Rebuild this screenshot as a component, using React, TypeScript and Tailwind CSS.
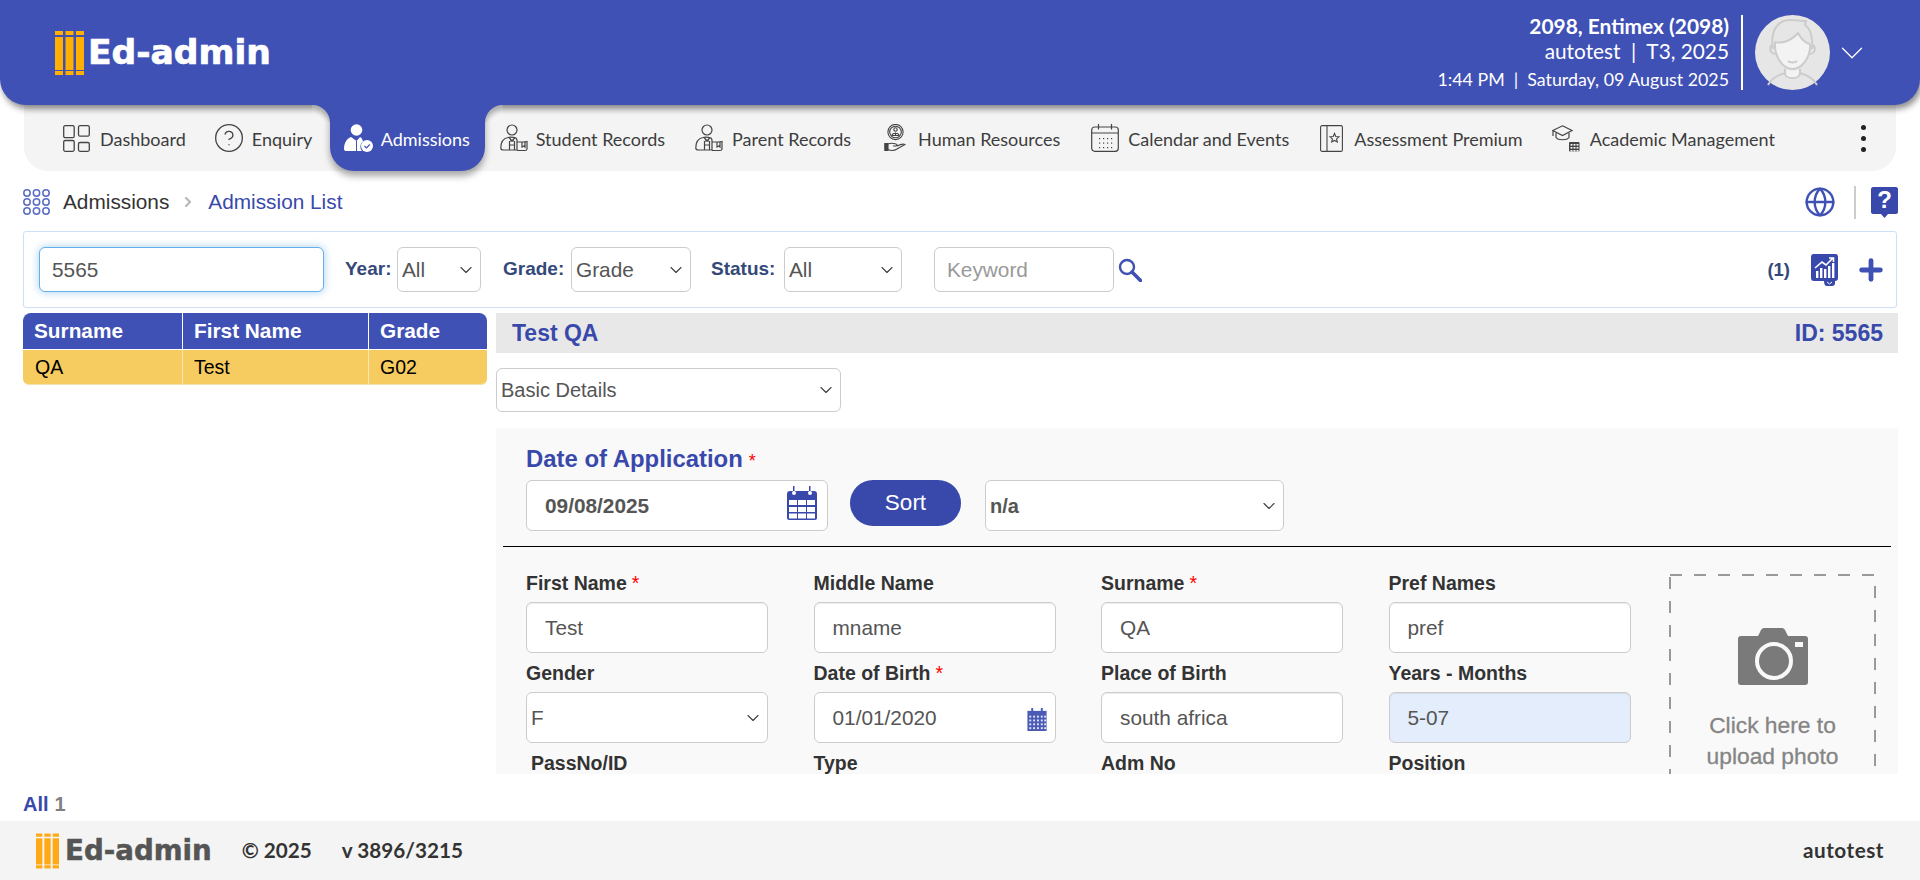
import { ChevronDown, ChevronRight, CircleHelp, Globe, Plus } from "lucide-react";

const BLUE = "#3f51b5";

function LogoBars({ className, color }: { className: string; color: string }) {
  return (
    <svg viewBox="0 0 29 44" className={className}>
      {[0, 10.5, 21].map((x) => (
        <g key={x} fill={color}>
          <rect x={x} y="0" width="8" height="4" />
          <rect x={x} y="6" width="8" height="33" />
          <rect x={x} y="40" width="8" height="4" />
        </g>
      ))}
    </svg>
  );
}

function DashboardIcon() {
  return (
    <svg viewBox="0 0 27 27" className="w-[27px] h-[27px] shrink-0" fill="none" stroke="#444" strokeWidth="1.3">
      <rect x="0.7" y="0.7" width="10.5" height="12" rx="1.5" />
      <rect x="15.5" y="0.7" width="10.8" height="10.5" rx="1.5" />
      <rect x="0.7" y="15.5" width="10.5" height="10.8" rx="1.5" />
      <rect x="15.5" y="17.5" width="10.8" height="8.8" rx="1.5" />
    </svg>
  );
}

function PersonBookIcon() {
  return (
    <svg viewBox="0 0 28 28" className="w-[28px] h-[28px] shrink-0" fill="none" stroke="#444" strokeWidth="1.2">
      <circle cx="12" cy="6" r="5" />
      <path d="M8 13.5 C3 14.5 0.8 19 0.8 24 C0.8 25.5 2 26 3.5 26 L17 26 L17 16 L16 14 C15 13.7 10 13 8 13.5 Z" />
      <path d="M9 13.5 L12 17 L15 13.5 M10 17 L14 17 M9.5 17 V26 M14.5 17 V26 M10 21 H14" />
      <path d="M17 18 H23 C25 18 27 17.5 27 17.5 V25 C27 26 26 26.5 25 26.5 H17 M22 18 V23 L24 22 L25 23 V18" />
    </svg>
  );
}

function AdmissionsIcon() {
  return (
    <svg viewBox="0 0 29 28" className="w-[29px] h-[28px] shrink-0">
      <circle cx="12.5" cy="6" r="5.8" fill="#fff" />
      <path d="M7 13 C2.5 14.5 0 19.5 0 25 C0 26.5 1 27 2.5 27 H18 C16 25 15.5 20 19 17.5 C18.5 15.5 18 14 16 13 L12.5 17 Z" fill="#fff" />
      <path d="M12.5 17 V27" stroke={BLUE} strokeWidth="1" />
      <circle cx="23" cy="22" r="6" fill="#fff" />
      <path d="M20.5 22 L22.5 24 L25.8 20.5" stroke={BLUE} strokeWidth="1.2" fill="none" />
    </svg>
  );
}

function HrIcon() {
  return (
    <svg viewBox="0 0 22 28" className="w-[22px] h-[28px] shrink-0" fill="none" stroke="#444" strokeWidth="1.1">
      <circle cx="11.5" cy="8" r="7.6" />
      <circle cx="11.5" cy="8" r="5.8" />
      <circle cx="11.5" cy="5.5" r="1.7" />
      <path d="M8 11.5 C8 8.5 15 8.5 15 11.5 Z M11.5 8.5 V11.5" />
      <path d="M0.8 19.5 H4 V26.5 H0.8 Z" fill="#444" />
      <path d="M4 20 C7 18.5 9 19 12 20 C13.5 20.5 13.5 22 11.5 22 H9 M4 25.5 C8 27.5 10 27 13 25 L21 20.5 C19 19.5 17 20 13 22" />
    </svg>
  );
}

function CalendarIcon() {
  return (
    <svg viewBox="0 0 28 28" className="w-[28px] h-[28px] shrink-0" fill="none" stroke="#444" strokeWidth="1.2">
      <rect x="0.7" y="3" width="26.6" height="24.3" rx="3" />
      <path d="M0.7 9 H27.3 M7.5 0 V5.5 M20.5 0 V5.5" />
      {[14, 18.5, 23].map((y) =>
        [8, 12, 16, 20].map((x) => <rect key={`${x}-${y}`} x={x} y={y} width="1.2" height="1.2" fill="#444" stroke="none" />)
      )}
    </svg>
  );
}

function BookStarIcon() {
  return (
    <svg viewBox="0 0 23 27" className="w-[23px] h-[27px] shrink-0" fill="none" stroke="#444" strokeWidth="1.1">
      <rect x="0.6" y="0.6" width="21.8" height="25.8" rx="1.5" />
      <path d="M7 0.6 V26.4" />
      <path d="M14.5 8.5 L15.8 11.5 L19 11.8 L16.6 13.9 L17.3 17 L14.5 15.4 L11.7 17 L12.4 13.9 L10 11.8 L13.2 11.5 Z" />
    </svg>
  );
}

function GradCapIcon() {
  return (
    <svg viewBox="0 0 28 27" className="w-[28px] h-[27px] shrink-0" fill="none" stroke="#444" strokeWidth="1.2">
      <path d="M10.5 0.8 L20 5.5 L10.5 10.5 L0.8 5.5 Z" />
      <path d="M4 8 V12.5 C6 15.5 15 15.5 17 12.5 V8" />
      <path d="M1 6 V11" />
      <rect x="17" y="17" width="10.5" height="9.5" rx="1" fill="#444" stroke="none" />
      {[19, 22, 25].map((y) =>
        [18.5, 21.5, 24.5].map((x) => <rect key={`${x}-${y}`} x={x} y={y} width="2" height="1.6" fill="#f4f4f4" stroke="none" />)
      )}
    </svg>
  );
}

function Avatar() {
  return (
    <svg viewBox="0 0 75 75" className="w-[75px] h-[75px]">
      <circle cx="37.5" cy="37.5" r="37.5" fill="#e6e6e6" />
      <path d="M20 28 C27 29 35 26 43 18 C46 24 51 28 55 29 C56 42 47 54 37.5 54 C28 54 19 42 20 28 Z" fill="#f3f3f3" />
      <path d="M30 54 V60 C30 66 45 66 45 60 V54 C40 56 35 56 30 54 Z" fill="#f3f3f3" />
      <g fill="none" stroke="#cccccc" strokeWidth="2">
        <path d="M18 34 C15 16 22 6 34 5 C40 4.500 46 6 51 6 L50 10 C56 14 58 24 57 34" />
        <path d="M20 27 C27 29 36 26 43 18 C46 24 51 28 55 29" />
        <path d="M20 27 C19 42 28 54 37.5 54 C47 54 56 42 55 29" />
        <path d="M18 30 C14 31 14 38 20 39 M57 30 C61 31 61 38 55 39" />
        <path d="M33 46 C35 48 40 48 42 46" />
        <path d="M30 54 V58 C30 65 45 65 45 58 V54" />
        <path d="M13 70 C16 64 23 60 30 58 M45 58 C52 60 59 64 62 70" />
      </g>
    </svg>
  );
}

function BlueCalendar({ className }: { className: string }) {
  return (
    <svg viewBox="0 0 30 34" className={className}>
      <path d="M0 8 C0 6 1 5 3 5 H27 C29 5 30 6 30 8 V32 C30 33 29 34 28 34 H2 C1 34 0 33 0 32 Z" fill="#3949ab" />
      <path d="M6 0 H7.5 V7 H6 Z M22 0 H23.500 V7 H22 Z" fill="#3949ab" />
      <rect x="5" y="5" width="4" height="4" rx="2" fill="#fff" />
      <rect x="21" y="5" width="4" height="4" rx="2" fill="#fff" />
      {[14, 21, 27.5].map((y) =>
        [2, 11, 20].map((x) => <rect key={`${x}-${y}`} x={x} y={y} width="8" height="5" fill="#fff" />)
      )}
    </svg>
  );
}

function SmallCalendar() {
  return (
    <svg viewBox="0 0 20 24" className="w-[20px] h-[23px] shrink-0">
      <rect x="0" y="3" width="20" height="21" fill="#4a5ab5" />
      <path d="M4 0 H6 V4 H4 Z M14 0 H16 V4 H14 Z" fill="#4a5ab5" />
      {[8, 12, 16, 20].map((y) =>
        [2, 6, 10, 14, 17.5].map((x) => <rect key={`${x}-${y}`} x={x} y={y} width="2" height="2" fill="#dfe3f5" />)
      )}
    </svg>
  );
}

function CameraIcon() {
  return (
    <svg viewBox="0 0 70 57" className="w-[70px] h-[57px]">
      <path d="M3 8 H20 L23 2 C24 0.5 25 0 27 0 H43 C45 0 46 0.5 47 2 L50 8 H67 C69 8 70 9 70 11 V54 C70 56 69 57 67 57 H3 C1 57 0 56 0 54 V11 C0 9 1 8 3 8 Z" fill="#7a7a7a" />
      <circle cx="36" cy="33" r="17" fill="#7a7a7a" stroke="#f9f9f9" strokeWidth="4" />
      <rect x="57" y="14" width="8" height="5" fill="#f9f9f9" />
    </svg>
  );
}

function HelpBubble() {
  return (
    <svg viewBox="0 0 27 31" className="w-[27px] h-[31px]">
      <path d="M2 0 H25 C26 0 27 1 27 2 V25 C27 26 26 27 25 27 H17 L13.5 31 L10 27 H2 C1 27 0 26 0 25 V2 C0 1 1 0 2 0 Z" fill="#3949ab" />
      <text x="13.5" y="21" textAnchor="middle" fontSize="24" fontWeight="700" fill="#fff" fontFamily="Liberation Sans">?</text>
    </svg>
  );
}

function ChartIcon() {
  return (
    <svg viewBox="0 0 27 32" className="w-[27px] h-[32px]">
      <path d="M3 0 H24 C26 0 27 1 27 3 V24 C27 26 26 27 24 27 V29 C24 31 23 32 21 32 H16 C14 32 13 30 13 27 H3 C1 27 0 26 0 24 V3 C0 1 1 0 3 0 Z" fill="#3949ab" />
      <path d="M4 14 L11 8 L15 11 L22 4 M18 4 H22.5 V8" stroke="#fff" strokeWidth="1.6" fill="none" />
      {[
        [5, 17, 7],
        [9, 14, 10],
        [13, 15, 9],
        [17, 12, 12],
        [21, 9, 15],
      ].map(([x, y, h]) => (
        <rect key={x} x={x} y={y} width="2.4" height={h} fill="#fff" />
      ))}
      <path d="M16 28 L18.5 30 L21 28" stroke="#fff" strokeWidth="1" fill="none" />
    </svg>
  );
}

function SearchIcon() {
  return (
    <svg viewBox="0 0 24 24" className="ml-[4px] w-[24px] h-[24px]" fill="none" stroke={BLUE}>
      <circle cx="9" cy="9" r="7" strokeWidth="2.4" />
      <path d="M14 14 L22.500 22.500" strokeWidth="3.6" strokeLinecap="round" />
    </svg>
  );
}

function NavItem({ icon, label, className }: { icon: React.ReactNode; label: string; className: string }) {
  return (
    <div className={`flex items-center shrink-0 ${className}`}>
      {icon}
      <span className="pt-[2px] text-[#3d3d3d]">{label}</span>
    </div>
  );
}

function Select({ value, className, selectClass = "" }: { value: string; className: string; selectClass?: string }) {
  return (
    <div className={`relative shrink-0 ${className}`}>
      <select
        defaultValue={value}
        className={`appearance-none block w-full h-full pl-[4px] bg-white border border-[#ccc] rounded-[6px] text-[#555] ${selectClass}`}
      >
        <option>{value}</option>
      </select>
      <ChevronDown className="absolute right-[5px] top-1/2 -translate-y-1/2 w-[20px] h-[20px] text-[#444] pointer-events-none" strokeWidth={1.4} />
    </div>
  );
}

function Field({
  label,
  required,
  value,
  className = "",
  inputClass = "bg-white",
  children,
}: {
  label: string;
  required?: boolean;
  value?: string;
  className?: string;
  inputClass?: string;
  children?: React.ReactNode;
}) {
  return (
    <div>
      <div className={`h-[24px] leading-[24px] text-[19.5px] font-bold text-[#333] ${className}`}>
        {label}
        {required && <span className="text-[#f00] font-normal ml-[5px]">*</span>}
      </div>
      {children ?? (
        <input
          readOnly
          value={value ?? ""}
          className={`mt-[7px] block w-[242px] h-[51px] pl-[18px] border border-[#ccc] rounded-[6px] text-[20.8px] text-[#555] shadow-[inset_0_1px_1px_rgba(0,0,0,0.075)] ${inputClass}`}
        />
      )}
    </div>
  );
}

export default function App() {
  return (
    <div className="w-full h-[880px] overflow-hidden flex flex-col bg-white font-['Liberation_Sans',Arial,sans-serif]">
      <header className="relative z-20 h-[105px] shrink-0 bg-[#3f51b5] rounded-b-[26px] shadow-[2px_4px_6px_rgba(0,0,0,0.45)] flex items-center pl-[55px] pr-[49.5px] font-['Lato',sans-serif] text-white">
        <LogoBars className="w-[29px] h-[44px]" color="#ffb000" />
        <span className="ml-[4px] font-['DejaVu_Sans',sans-serif] font-bold text-[34.5px] leading-none text-white [-webkit-text-stroke:0.7px_white]">Ed-admin</span>
        <div className="ml-auto flex flex-col items-end text-right">
          <div className="text-[20.9px] font-bold leading-[25px]">2098, Entimex (2098)</div>
          <div className="text-[20.8px] leading-[25px]">autotest&nbsp; | &nbsp;T3, 2025</div>
          <div className="mt-[4px] text-[17.8px] leading-[25px]">1:44 PM&nbsp; | &nbsp;Saturday, 09 August 2025</div>
        </div>
        <div className="ml-[12px] w-[2px] h-[75px] bg-white" />
        <div className="ml-[12px]">
          <Avatar />
        </div>
        <ChevronDown className="ml-[2.5px] w-[38px] h-[38px] text-white" strokeWidth={0.8} />
      </header>

      <nav className="mx-[24px] h-[66px] shrink-0 bg-[#f4f4f4] rounded-b-[24px] flex items-center pl-[39px] font-['Lato',sans-serif] text-[18px]">
        <NavItem icon={<DashboardIcon />} label="Dashboard" className="gap-[10px]" />
        <NavItem icon={<CircleHelp className="w-[32px] h-[32px] shrink-0 text-[#444]" strokeWidth={1} />} label="Enquiry" className="ml-[27px] gap-[7px]" />
        <div className="relative z-30 ml-[17.5px] self-stretch w-[155px] bg-[#3f51b5] rounded-b-[24px] shadow-[0_5px_7px_rgba(0,0,0,0.35)] flex items-center pl-[14px] gap-[8px] text-white shrink-0">
          <span className="absolute left-[-18px] top-0 w-[18px] h-[18px] bg-[#3f51b5] overflow-hidden">
            <span className="block w-[30px] h-full -ml-[12px] bg-[#f4f4f4] rounded-tr-[18px] shadow-[inset_0_5px_5px_rgba(0,0,0,0.3)]" />
          </span>
          <span className="absolute right-[-18px] top-0 w-[18px] h-[18px] bg-[#3f51b5] overflow-hidden">
            <span className="block w-[30px] h-full bg-[#f4f4f4] rounded-tl-[18px] shadow-[inset_0_5px_5px_rgba(0,0,0,0.3)]" />
          </span>
          <AdmissionsIcon />
          <span className="pt-[2px]">Admissions</span>
        </div>
        <NavItem icon={<PersonBookIcon />} label="Student Records" className="ml-[15px] gap-[8px]" />
        <NavItem icon={<PersonBookIcon />} label="Parent Records" className="ml-[30px] gap-[9px]" />
        <NavItem icon={<HrIcon />} label="Human Resources" className="ml-[33px] gap-[12px]" />
        <NavItem icon={<CalendarIcon />} label="Calendar and Events" className="ml-[31px] gap-[9px]" />
        <NavItem icon={<BookStarIcon />} label="Assessment Premium" className="ml-[31px] gap-[11px]" />
        <NavItem icon={<GradCapIcon />} label="Academic Management" className="ml-[29px] gap-[10px]" />
        <div className="ml-auto mr-[30px] flex flex-col gap-[6px]">
          <span className="w-[5px] h-[5px] rounded-full bg-[#222]" />
          <span className="w-[5px] h-[5px] rounded-full bg-[#222]" />
          <span className="w-[5px] h-[5px] rounded-full bg-[#222]" />
        </div>
      </nav>

      <div className="h-[60px] shrink-0 flex items-center pl-[23px] pr-[22px] pt-[2px]">
        <svg viewBox="0 0 27 26" className="w-[27px] h-[26px]" fill="none" stroke="#5a6bc4" strokeWidth="1.5">
          {[4, 13, 22].map((y) =>
            [4, 13.5, 23].map((x) => <circle key={`${x}-${y}`} cx={x} cy={y} r="3.2" />)
          )}
        </svg>
        <span className="ml-[13px] text-[20.8px] text-[#333]">Admissions</span>
        <ChevronRight className="ml-[11px] w-[16px] h-[16px] text-[#bbb]" strokeWidth={3.5} />
        <span className="ml-[12px] text-[20.8px] text-[#3949ab]">Admission List</span>
        <Globe className="ml-auto w-[32px] h-[32px] text-[#3f51b5]" strokeWidth={1.8} />
        <div className="ml-[18px] w-[2px] h-[33px] bg-[#ccc]" />
        <div className="ml-[15px]">
          <HelpBubble />
        </div>
      </div>

      <div className="mx-[23px] h-[77px] shrink-0 border border-[#cfe0f5] rounded-[3px] flex items-center pl-[15px] pr-[9px]">
        <input
          readOnly
          value="5565"
          className="w-[285px] h-[45px] pl-[12px] bg-white border border-[#66afe9] rounded-[6px] text-[20.8px] text-[#555] shadow-[0_0_8px_rgba(102,175,233,0.6)]"
        />
        <span className="ml-[21px] w-[52px] shrink-0 text-[19px] font-bold text-[#34497a]">Year:</span>
        <Select value="All" className="w-[84px] h-[45px]" selectClass="text-[20.8px]" />
        <span className="ml-[22px] w-[68px] shrink-0 text-[19px] font-bold text-[#34497a]">Grade:</span>
        <Select value="Grade" className="w-[120px] h-[45px]" selectClass="text-[20.8px]" />
        <span className="ml-[20px] w-[73px] shrink-0 text-[19px] font-bold text-[#34497a]">Status:</span>
        <Select value="All" className="w-[118px] h-[45px]" selectClass="text-[20.8px]" />
        <input
          readOnly
          placeholder="Keyword"
          className="ml-[32px] w-[180px] h-[45px] pl-[12px] bg-white border border-[#ccc] rounded-[6px] text-[20.8px] placeholder:text-[#999]"
        />
        <SearchIcon />
        <span className="ml-auto text-[18.5px] font-bold text-[#34497a]">(1)</span>
        <div className="ml-[21px]">
          <ChartIcon />
        </div>
        <Plus className="ml-[17px] w-[32px] h-[32px] text-[#3f51b5]" strokeWidth={3.6} />
      </div>

      <div className="flex mt-[5px] ml-[23px] h-[461px] shrink-0">
        <div className="w-[464px] shrink-0">
          <div className="grid grid-cols-[160px_186px_1fr] h-[36px] rounded-t-[8px] bg-[#3f51b5] text-white font-bold text-[20.8px] leading-[36px] overflow-hidden">
            <div className="pl-[11px] border-r border-white">Surname</div>
            <div className="pl-[11px] border-r border-white">First Name</div>
            <div className="pl-[11px]">Grade</div>
          </div>
          <div className="grid grid-cols-[160px_186px_1fr] mt-px h-[35px] rounded-b-[6px] bg-[#f6cb5f] text-black text-[19.5px] leading-[35px] border-b border-[#f3e3b0]">
            <div className="pl-[12px] border-r border-[#f9e6b5]">QA</div>
            <div className="pl-[11px] border-r border-[#f9e6b5]">Test</div>
            <div className="pl-[11px]">G02</div>
          </div>
        </div>

        <div className="ml-[9px] w-[1402px] shrink-0">
          <div className="h-[40px] bg-[#e8e8e8] flex items-center justify-between pl-[16px] pr-[15px] text-[23px] font-bold text-[#3949ab]">
            <span>Test QA</span>
            <span>ID: 5565</span>
          </div>
          <Select value="Basic Details" className="mt-[15px] w-[345px] h-[44px]" selectClass="text-[20px]" />

          <div className="mt-[16px] h-[346px] overflow-hidden bg-[#f9f9f9] pt-[18px]">
            <div className="pl-[30px] h-[26px] leading-[26px] text-[23.9px] font-bold text-[#3949ab]">
              Date of Application
              <span className="ml-[6px] text-[18px] font-normal text-[#f00]">*</span>
            </div>
            <div className="mt-[8px] pl-[30px] flex items-start">
              <div className="relative w-[302px] h-[51px]">
                <input
                  readOnly
                  value="09/08/2025"
                  className="w-full h-full pl-[18px] bg-white border border-[#ccc] rounded-[6px] text-[20.8px] font-bold text-[#555]"
                />
                <BlueCalendar className="absolute left-[261px] top-[6px] w-[30px] h-[34px]" />
              </div>
              <button className="ml-[22px] w-[111px] h-[46px] rounded-full bg-[#3949ab] text-white text-[22.5px]">Sort</button>
              <Select value="n/a" className="ml-[24px] w-[299px] h-[51px]" selectClass="text-[20px] font-bold" />
            </div>
            <div className="mt-[15px] mx-[7px] h-px bg-black" />

            <div className="mt-[24px] pl-[30px] flex items-start">
              <div className="grid grid-cols-[repeat(4,242px)] gap-x-[45.5px] gap-y-[8px] w-[1106px] shrink-0">
                <Field label="First Name" required value="Test" />
                <Field label="Middle Name" value="mname" />
                <Field label="Surname" required value="QA" />
                <Field label="Pref Names" value="pref" />
                <Field label="Gender">
                  <Select value="F" className="mt-[7px] w-[242px] h-[51px]" selectClass="text-[20.8px]" />
                </Field>
                <Field label="Date of Birth" required>
                  <div className="relative mt-[7px] w-[242px] h-[51px]">
                    <input
                      readOnly
                      value="01/01/2020"
                      className="w-full h-full pl-[18px] bg-white border border-[#ccc] rounded-[6px] text-[20.8px] text-[#555]"
                    />
                    <div className="absolute right-[9px] top-[16px]">
                      <SmallCalendar />
                    </div>
                  </div>
                </Field>
                <Field label="Place of Birth" value="south africa" />
                <Field label="Years - Months" value="5-07" inputClass="bg-[#e4edfb]" />
                <Field label="PassNo/ID" value="" className="pl-[5px]" />
                <Field label="Type" value="" />
                <Field label="Adm No" value="" />
                <Field label="Position" value="" />
              </div>
              <div className="relative ml-[37px] mt-[3px] w-[207px] h-[260px] shrink-0 flex flex-col items-center pt-[54px] text-[22.8px] leading-[31px] text-[#858585] [-webkit-text-stroke:0.3px_#858585]">
                <svg viewBox="0 0 207 260" className="absolute inset-0 w-[207px] h-[260px]" fill="none" stroke="#999" strokeWidth="2" strokeDasharray="12 12">
                  <rect x="1" y="1" width="205" height="258" />
                </svg>
                <CameraIcon />
                <div className="mt-[25px] text-center">
                  Click here to
                  <br />
                  upload photo
                </div>
              </div>
            </div>
          </div>
        </div>
      </div>

      <div className="h-[47px] shrink-0 flex items-center pl-[23px] pt-[13px] text-[20px] font-bold">
        <span className="text-[#3949ab]">All</span>
        <span className="ml-[6px] text-[#808080]">1</span>
      </div>

      <footer className="h-[59px] shrink-0 bg-[#f4f4f4] flex items-center pl-[36px] pr-[36px] font-['Lato',sans-serif] font-bold text-[20.7px] text-[#333]">
        <LogoBars className="w-[23px] h-[36px]" color="#ffa914" />
        <span className="ml-[6px] font-['DejaVu_Sans',sans-serif] text-[27.7px] leading-none text-[#555] [-webkit-text-stroke:0.5px_#555]">Ed-admin</span>
        <span className="ml-[30px]">© 2025</span>
        <span className="ml-[30px]">v 3896/3215</span>
        <span className="ml-auto tracking-[0.5px]">autotest</span>
      </footer>
    </div>
  );
}
